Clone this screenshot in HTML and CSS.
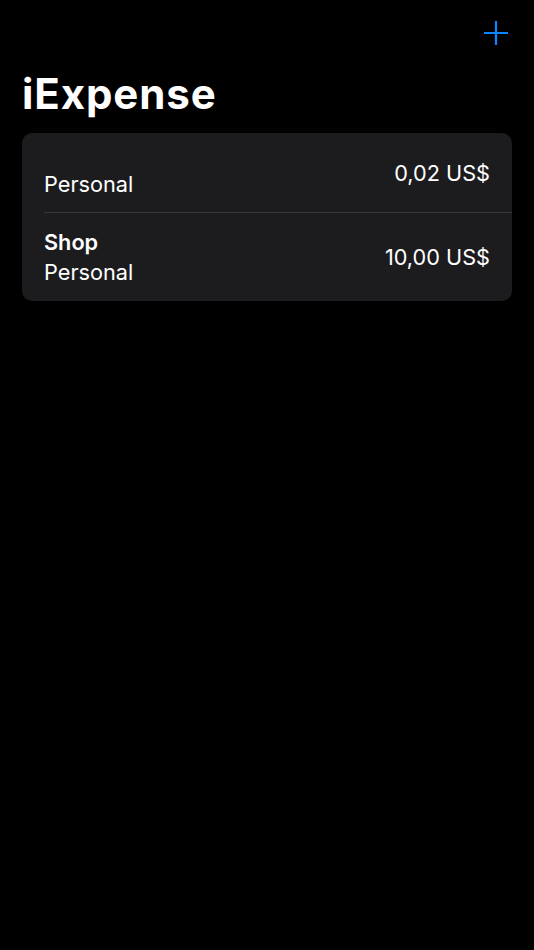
FILE: index.html
```html
<!DOCTYPE html>
<html lang="en">
<head>
<meta charset="utf-8">
<title>iExpense</title>
<link rel="stylesheet" href="styles.css">
</head>
<body>
<div class="nav">
  <button class="add" aria-label="Add">
    <svg width="24" height="24" viewBox="0 0 24 24"><path d="M12 0.5V23.5M0.5 12H23.5" stroke="#0a84ff" stroke-width="2.2" stroke-linecap="round" fill="none"/></svg>
  </button>
</div>
<h1 class="title">iExpense</h1>
<div class="card">
  <div class="row">
    <div class="info">
      <div class="name empty"></div>
      <div class="type">Personal</div>
    </div>
    <div class="amount">0,02 US$</div>
  </div>
  <div class="row last">
    <div class="info">
      <div class="name">Shop</div>
      <div class="type">Personal</div>
    </div>
    <div class="amount">10,00 US$</div>
  </div>
</div>
</body>
</html>
```

FILE: styles.css
```css
html, body {
  margin: 0;
  padding: 0;
  background: #000;
  color: #fff;
  font-family: Inter, "Noto Sans", "Liberation Sans", sans-serif;
}
.nav {
  height: 69px;
  display: flex;
  justify-content: flex-end;
  align-items: flex-start;
  padding-right: 26px;
}
.add {
  margin-top: 21px;
  width: 24px;
  height: 24px;
  padding: 0;
  border: 0;
  background: none;
  display: block;
}
.add svg { display: block; }
.title {
  margin: 0 0 14px 22px;
  font-size: 42px;
  line-height: 50px;
  font-weight: 700;
  letter-spacing: 0.9px;
}
.card {
  margin: 0 22px;
  background: #1c1c1e;
  border-radius: 10px;
  overflow: hidden;
}
.row {
  margin-left: 22px;
  padding: 14px 22px 13px 0;
  display: flex;
  justify-content: space-between;
  align-items: center;
  border-bottom: 1px solid #38383a;
}
.row.last { border-bottom: 0; padding-top: 14px; padding-bottom: 14px; }
.info {
  display: flex;
  flex-direction: column;
}
.name {
  font-size: 21.7px;
  line-height: 30px;
  font-weight: 600;
}
.name.empty { height: 22px; }
.type, .amount {
  font-size: 21.7px;
  line-height: 30px;
  font-weight: 400;
}
```
